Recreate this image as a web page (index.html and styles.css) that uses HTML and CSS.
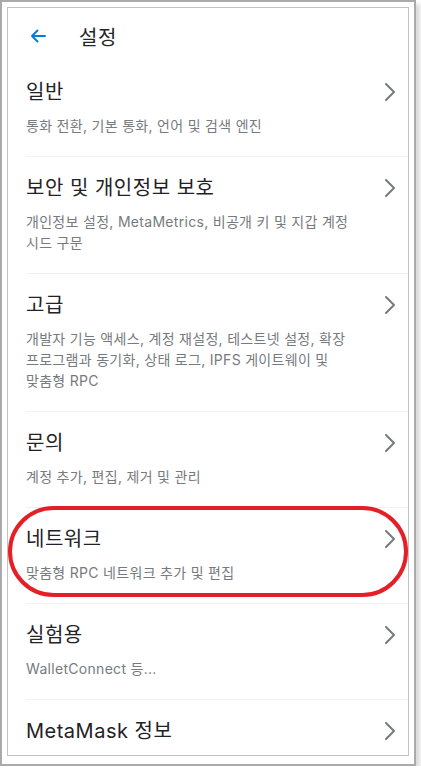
FILE: index.html
```html
<!DOCTYPE html>
<html lang="ko">
<head>
  <meta charset="UTF-8" />
  <meta name="viewport" content="width=device-width, initial-scale=1.0" />
  <title>설정</title>
  <link rel="stylesheet" href="styles.css">
</head>
<body>
  <div class="shot">
    <div class="phone">
      <div class="header">
        <svg class="back" width="16" height="14" viewBox="0 0 16 14">
          <path d="M15 7H2M7.5 1.5L2 7l5.5 5.5" fill="none" stroke="#037dd6" stroke-width="2" stroke-linecap="round" stroke-linejoin="round"/>
        </svg>
        <span class="header-title">설정</span>
      </div>

      <div class="row">
        <div class="row-inner">
          <div class="row-top"><span class="row-title">일반</span><svg class="chev" width="14" height="20" viewBox="0 0 14 20"><polyline points="3,2 11,10 3,18"/></svg></div>
          <div class="row-sub">통화 전환, 기본 통화, 언어 및 검색 엔진</div>
        </div>
      </div>

      <div class="row">
        <div class="row-inner">
          <div class="row-top"><span class="row-title">보안 및 개인정보 보호</span><svg class="chev" width="14" height="20" viewBox="0 0 14 20"><polyline points="3,2 11,10 3,18"/></svg></div>
          <div class="row-sub">개인정보 설정, MetaMetrics, 비공개 키 및 지갑 계정<br>시드 구문</div>
        </div>
      </div>

      <div class="row">
        <div class="row-inner">
          <div class="row-top"><span class="row-title">고급</span><svg class="chev" width="14" height="20" viewBox="0 0 14 20"><polyline points="3,2 11,10 3,18"/></svg></div>
          <div class="row-sub">개발자 기능 액세스, 계정 재설정, 테스트넷 설정, 확장<br>프로그램과 동기화, 상태 로그, IPFS 게이트웨이 및<br>맞춤형 RPC</div>
        </div>
      </div>

      <div class="row">
        <div class="row-inner">
          <div class="row-top"><span class="row-title">문의</span><svg class="chev" width="14" height="20" viewBox="0 0 14 20"><polyline points="3,2 11,10 3,18"/></svg></div>
          <div class="row-sub">계정 추가, 편집, 제거 및 관리</div>
        </div>
      </div>

      <div class="row marked">
        <div class="row-inner">
          <div class="row-top"><span class="row-title">네트워크</span><svg class="chev" width="14" height="20" viewBox="0 0 14 20"><polyline points="3,2 11,10 3,18"/></svg></div>
          <div class="row-sub">맞춤형 RPC 네트워크 추가 및 편집</div>
        </div>
        <div class="ring"></div>
      </div>

      <div class="row">
        <div class="row-inner">
          <div class="row-top"><span class="row-title">실험용</span><svg class="chev" width="14" height="20" viewBox="0 0 14 20"><polyline points="3,2 11,10 3,18"/></svg></div>
          <div class="row-sub">WalletConnect 등...</div>
        </div>
      </div>

      <div class="row">
        <div class="row-inner">
          <div class="row-top"><span class="row-title">MetaMask 정보</span><svg class="chev" width="14" height="20" viewBox="0 0 14 20"><polyline points="3,2 11,10 3,18"/></svg></div>
        </div>
      </div>
    </div>
  </div>
</body>
</html>
```

FILE: styles.css
```css
body {
  margin: 0;
  background: #fff;
  font-family: Inter, "Noto Sans CJK KR", sans-serif;
}
.shot {
  width: 416px;
  height: 766px;
  box-sizing: border-box;
  border: 2px solid #aaa;
  padding: 5px 5px 8px 5px;
  background: #fff;
  box-shadow: 4px 4px 4px rgba(0, 0, 0, 0.14);
}
.phone {
  height: 100%;
  box-sizing: border-box;
  border: 1px solid #c2c2c2;
  overflow: hidden;
}
.header {
  height: 53px;
  box-sizing: border-box;
  padding: 3px 0 0 22px;
  display: flex;
  align-items: center;
}
.back {
  display: block;
}
.header-title {
  margin-left: 33px;
  font-size: 20px;
  letter-spacing: 0.5px;
  color: #24272a;
}
.row {
  position: relative;
  padding-left: 18px;
}
.row-inner {
  padding: 18px 11px 20px 0;
  border-bottom: 1px solid #f0f1f2;
}
.row-top {
  display: flex;
  align-items: center;
  justify-content: space-between;
  height: 26px;
}
.row-title {
  font-size: 20px;
  line-height: 26px;
  letter-spacing: 0.5px;
  color: #1f2226;
}
.chev {
  display: block;
}
.chev polyline {
  fill: none;
  stroke: #747a80;
  stroke-width: 2;
  stroke-linecap: round;
  stroke-linejoin: round;
}
.row-sub {
  margin-top: 10px;
  font-size: 14px;
  line-height: 21px;
  letter-spacing: 0.3px;
  color: #767b80;
}
.ring {
  position: absolute;
  left: 0;
  right: 0;
  top: -2px;
  bottom: 7px;
  border: 4px solid #e41f26;
  border-radius: 48px;
}
```
